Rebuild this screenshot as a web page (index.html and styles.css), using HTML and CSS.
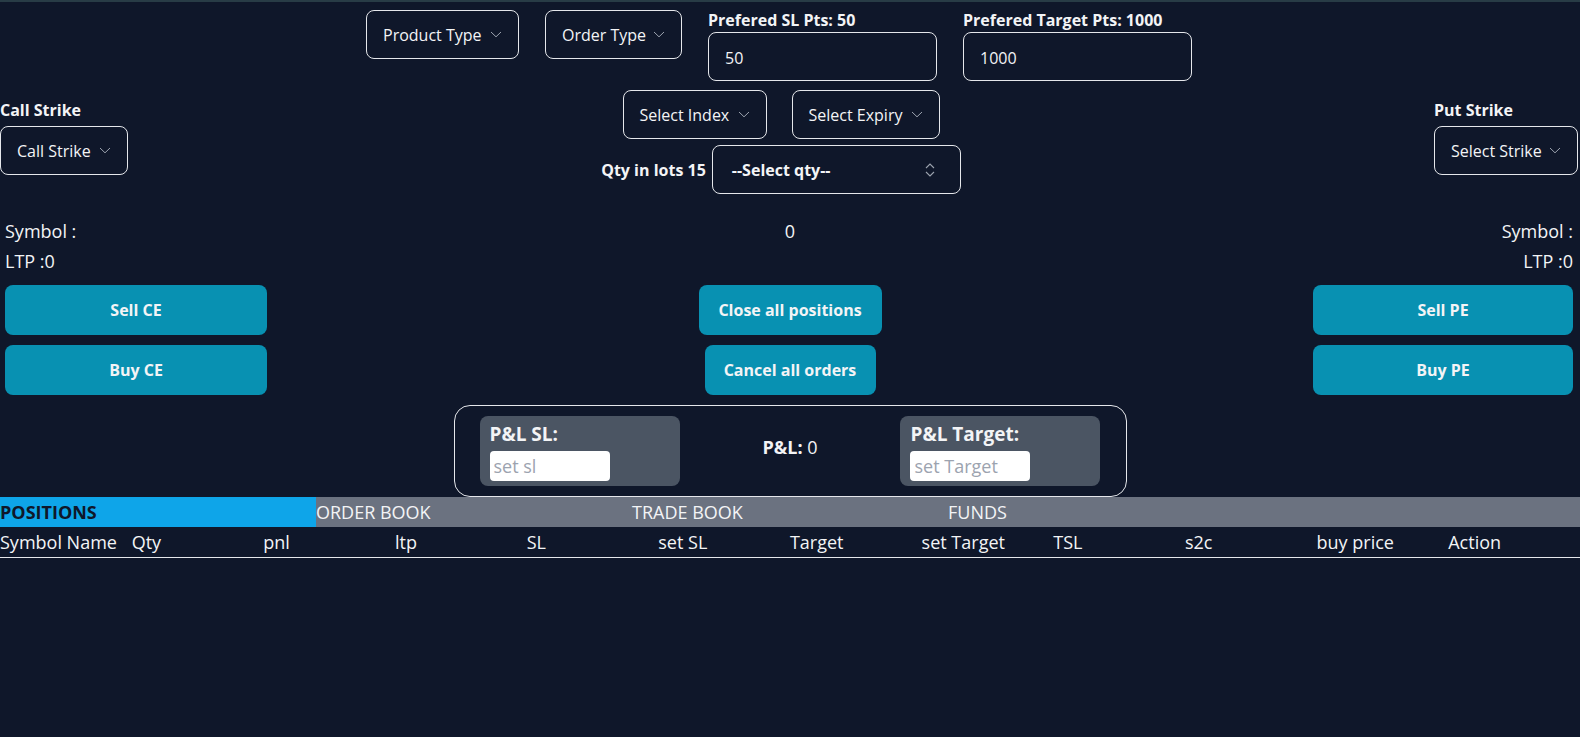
FILE: index.html
```html
<!DOCTYPE html>
<html lang="en">
<head>
<meta charset="utf-8">
<title>Trading Panel</title>
<link rel="stylesheet" href="styles.css">
</head>
<body>
<div class="page">
  <div class="top-row">
    <div class="select w-product"><span>Product Type</span><svg class="chev" width="12" height="7" viewBox="0 0 12 7"><path d="M1 1L6 5.8L11 1" fill="none" stroke="#9ca3af" stroke-width="1"/></svg></div>
    <div class="select w-order"><span>Order Type</span><svg class="chev" width="12" height="7" viewBox="0 0 12 7"><path d="M1 1L6 5.8L11 1" fill="none" stroke="#9ca3af" stroke-width="1"/></svg></div>
    <div class="field">
      <div class="field-label">Prefered SL Pts: 50</div>
      <div class="text-input">50</div>
    </div>
    <div class="field">
      <div class="field-label">Prefered Target Pts: 1000</div>
      <div class="text-input">1000</div>
    </div>
  </div>

  <div class="mid">
    <div class="side side-left">
      <div class="side-label">Call Strike</div>
      <div class="select w-call"><span>Call Strike</span><svg class="chev" width="12" height="7" viewBox="0 0 12 7"><path d="M1 1L6 5.8L11 1" fill="none" stroke="#9ca3af" stroke-width="1"/></svg></div>
    </div>
    <div class="center">
      <div class="center-row">
        <div class="select w-index"><span>Select Index</span><svg class="chev" width="12" height="7" viewBox="0 0 12 7"><path d="M1 1L6 5.8L11 1" fill="none" stroke="#9ca3af" stroke-width="1"/></svg></div>
        <div class="select w-expiry"><span>Select Expiry</span><svg class="chev" width="12" height="7" viewBox="0 0 12 7"><path d="M1 1L6 5.8L11 1" fill="none" stroke="#9ca3af" stroke-width="1"/></svg></div>
      </div>
      <div class="center-row qty-row">
        <div class="qty-label">Qty in lots 15</div>
        <div class="select qty-select"><span>--Select qty--</span><svg class="updown" width="12" height="16" viewBox="0 0 12 16"><path d="M2 6L6 2L10 6M2 10L6 14L10 10" fill="none" stroke="#9ca3af" stroke-width="1.1"/></svg></div>
      </div>
    </div>
    <div class="side side-right">
      <div class="side-label">Put Strike</div>
      <div class="select w-strike"><span>Select Strike</span><svg class="chev" width="12" height="7" viewBox="0 0 12 7"><path d="M1 1L6 5.8L11 1" fill="none" stroke="#9ca3af" stroke-width="1"/></svg></div>
    </div>
  </div>

  <div class="trade">
    <div class="col col-left">
      <div class="info">Symbol :</div>
      <div class="info">LTP :0</div>
      <button class="btn btn-wide">Sell CE</button>
      <button class="btn btn-wide">Buy CE</button>
    </div>
    <div class="col col-center">
      <div class="info">0</div>
      <div class="info"></div>
      <button class="btn w-close">Close all positions</button>
      <button class="btn w-cancel">Cancel all orders</button>
    </div>
    <div class="col col-right">
      <div class="info">Symbol :</div>
      <div class="info">LTP :0</div>
      <button class="btn btn-wide">Sell PE</button>
      <button class="btn btn-wide">Buy PE</button>
    </div>
  </div>

  <div class="pnl-wrap">
    <div class="pnl">
      <div class="pnl-card">
        <div class="pnl-label">P&amp;L SL:</div>
        <div class="pnl-input">set sl</div>
      </div>
      <div class="pnl-value"><b>P&amp;L:</b> 0</div>
      <div class="pnl-card">
        <div class="pnl-label">P&amp;L Target:</div>
        <div class="pnl-input">set Target</div>
      </div>
    </div>
  </div>

  <div class="tabs">
    <div class="tab tab-active">POSITIONS</div>
    <div class="tab">ORDER BOOK</div>
    <div class="tab">TRADE BOOK</div>
    <div class="tab">FUNDS</div>
    <div class="tab"></div>
  </div>

  <table class="grid">
    <thead>
      <tr>
        <th>Symbol Name</th>
        <th>Qty</th>
        <th>pnl</th>
        <th>ltp</th>
        <th>SL</th>
        <th>set SL</th>
        <th>Target</th>
        <th>set Target</th>
        <th>TSL</th>
        <th>s2c</th>
        <th>buy price</th>
        <th>Action</th>
      </tr>
    </thead>
    <tbody></tbody>
  </table>
</div>
</body>
</html>
```

FILE: styles.css
```css
* { box-sizing: border-box; }

html, body {
  margin: 0;
  padding: 0;
}

body {
  background: #0f172a;
  color: #f3f4f6;
  font-family: "Open Sans", "Noto Sans", sans-serif;
  font-size: 16px;
  min-height: 100vh;
}

.page {
  border-top: 2px solid #283c46;
  min-height: 100vh;
}

/* ---------- top row ---------- */
.top-row {
  display: flex;
  justify-content: center;
  align-items: flex-start;
  gap: 26px;
  padding: 8px 22px 0 0;
}

.select {
  height: 49px;
  border: 1px solid #e5e7eb;
  border-radius: 8px;
  display: flex;
  align-items: center;
  padding: 0 16px;
  color: #f3f4f6;
  font-size: 16px;
  white-space: nowrap;
}

.select span { flex: 1; }

.chev { flex: none; margin-left: 4px; }

.w-product { width: 153px; }
.w-order { width: 137px; }
.w-call { width: 128px; }
.w-index { width: 144px; }
.w-expiry { width: 148px; }
.w-strike { width: 144px; }

.field {
  display: flex;
  flex-direction: column;
}

.field-label {
  font-weight: 700;
  font-size: 16px;
  line-height: 20px;
  margin-bottom: 2px;
  white-space: nowrap;
}

.text-input {
  width: 229px;
  height: 49px;
  border: 1px solid #e5e7eb;
  border-radius: 8px;
  padding: 2px 16px 0;
  display: flex;
  align-items: center;
  font-size: 16px;
}

/* ---------- mid ---------- */
.mid {
  display: flex;
  align-items: flex-start;
  margin-top: 9px;
}

.side {
  display: flex;
  flex-direction: column;
  align-items: flex-start;
  margin-top: 8px;
}

.side-right { margin-right: 2px; }

.side-label {
  font-weight: 700;
  font-size: 16px;
  line-height: 24px;
  margin-bottom: 4px;
}

.center {
  flex: 1;
  display: flex;
  flex-direction: column;
  align-items: center;
  gap: 6px;
}

.center-row {
  display: flex;
  align-items: center;
  gap: 25px;
}

.qty-row { gap: 6px; }

.qty-label {
  font-weight: 700;
  font-size: 16px;
}

.qty-select {
  width: 249px;
  padding: 0 24px 0 19px;
  font-weight: 700;
}

.updown { flex: none; }

/* ---------- trade ---------- */
.trade {
  display: flex;
  justify-content: space-between;
  align-items: flex-start;
  padding: 0 7px 0 5px;
  margin-top: 22px;
}

.col {
  display: flex;
  flex-direction: column;
}

.col-left { width: 262px; align-items: flex-start; }
.col-right { width: 260px; align-items: flex-end; }
.col-center { align-items: center; }

.info {
  font-size: 18px;
  line-height: 30px;
  height: 30px;
}

.btn {
  height: 50px;
  border: none;
  border-radius: 8px;
  background: #0891b2;
  color: #f3f4f6;
  font-family: inherit;
  font-weight: 700;
  font-size: 16px;
  padding: 0 20px;
  margin-top: 10px;
  cursor: pointer;
}

.col .info + .btn { margin-top: 9px; }

.btn-wide { width: 100%; }
.w-close { width: 183px; padding: 0; }
.w-cancel { width: 171px; padding: 0; }

/* ---------- pnl ---------- */
.pnl-wrap {
  display: flex;
  justify-content: center;
  margin-top: 10px;
}

.pnl {
  width: 673px;
  border: 1px solid #e5e7eb;
  border-radius: 16px;
  padding: 10px 25px 10px;
  display: flex;
  justify-content: space-between;
  align-items: center;
}

.pnl-card {
  width: 200px;
  height: 70px;
  background: #4b5563;
  border-radius: 8px;
  padding: 4px 10px 5px;
}

.pnl-label {
  font-weight: 700;
  font-size: 19px;
  line-height: 28px;
  margin-bottom: 3px;
}

.pnl-input {
  width: 120px;
  height: 30px;
  background: #ffffff;
  border-radius: 4px;
  color: #9ca3af;
  font-size: 18px;
  line-height: 30px;
  padding: 0 4px;
}

.pnl-value {
  font-size: 18px;
  margin-bottom: 8px;
}

/* ---------- tabs ---------- */
.tabs {
  display: flex;
  background: #6b7280;
}

.tab {
  flex: 1;
  height: 30px;
  font-size: 18px;
  line-height: 30px;
  color: #f3f4f6;
  white-space: nowrap;
}

.tab-active {
  background: #0ea5e9;
  color: #0f172a;
  font-weight: 700;
}

/* ---------- table ---------- */
.grid {
  width: 100%;
  table-layout: fixed;
  border-collapse: collapse;
}

.grid th {
  text-align: left;
  font-weight: 400;
  font-size: 18px;
  line-height: 30px;
  padding: 0;
  white-space: nowrap;
  border-bottom: 1px solid #e5e7eb;
}
```
